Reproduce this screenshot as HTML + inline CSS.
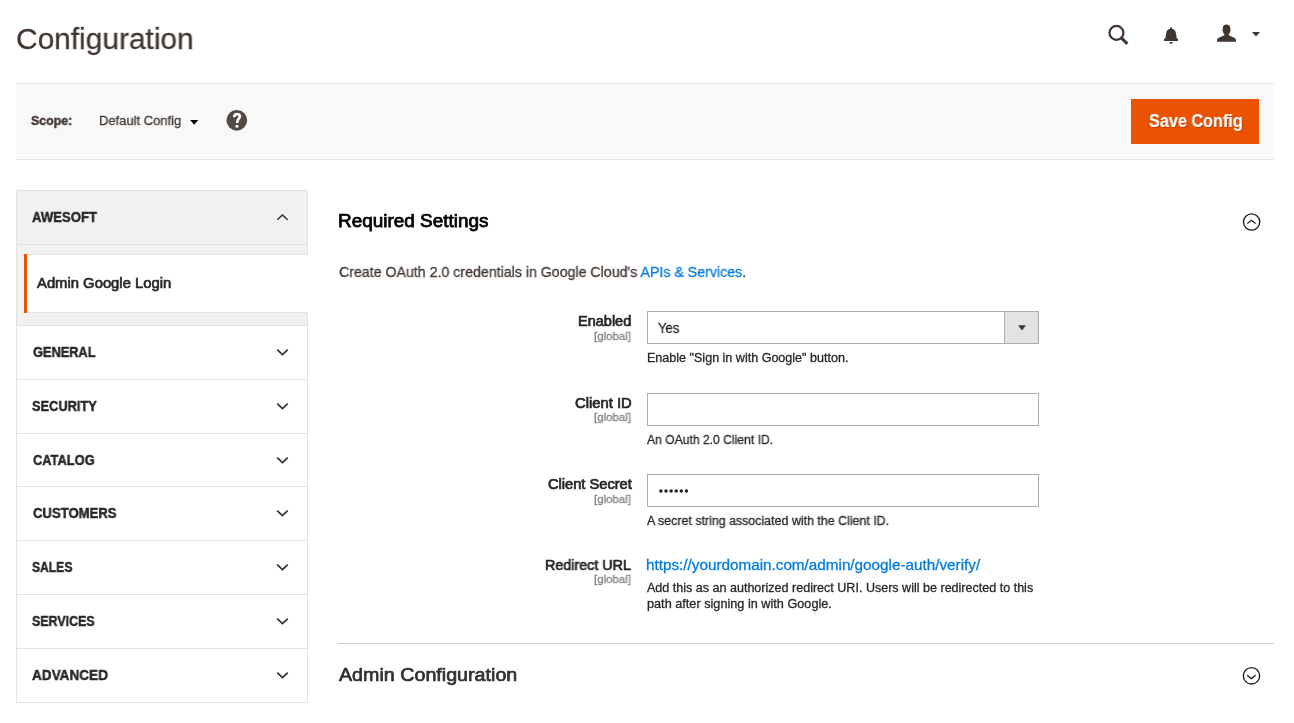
<!DOCTYPE html>
<html><head><meta charset="utf-8">
<style>
html,body{margin:0;padding:0;background:#fff;width:1294px;height:723px;overflow:hidden;position:relative;}
body{font-family:"Liberation Sans",sans-serif;}
.t{position:absolute;white-space:nowrap;line-height:1;transform-origin:0 0;will-change:transform;}
.abs{position:absolute;}
</style></head><body>
<!-- toolbar -->
<div class="abs" style="left:16px;top:83px;width:1258px;height:75px;background:#f8f8f8;border-top:1px solid #e3e3e3;border-bottom:1px solid #e3e3e3;"></div>
<div class="abs" style="left:1131px;top:99px;width:128px;height:45px;background:#eb5202;"></div>
<!-- sidebar -->
<div class="abs" style="left:16px;top:190px;width:290px;height:512px;border:1px solid #e3e3e3;border-bottom:none;background:#fff;"></div>
<div class="abs" style="left:17px;top:191px;width:290px;height:134px;background:#f1f1f1;"></div>
<div class="abs" style="left:17px;top:244px;width:290px;height:1px;background:#e3e3e3;"></div>
<div class="abs" style="left:24px;top:254px;width:296px;height:59px;background:#fff;"></div>
<div class="abs" style="left:27px;top:254px;width:281px;height:1px;background:#e3e3e3;"></div>
<div class="abs" style="left:27px;top:312px;width:281px;height:1px;background:#e3e3e3;"></div>
<div class="abs" style="left:24px;top:254px;width:3px;height:59px;background:#eb5202;"></div>
<div class="abs" style="left:17px;top:325px;width:290px;height:1px;background:#e3e3e3;"></div><div class="abs" style="left:17px;top:379px;width:290px;height:1px;background:#e3e3e3;"></div><div class="abs" style="left:17px;top:433px;width:290px;height:1px;background:#e3e3e3;"></div><div class="abs" style="left:17px;top:486px;width:290px;height:1px;background:#e3e3e3;"></div><div class="abs" style="left:17px;top:540px;width:290px;height:1px;background:#e3e3e3;"></div><div class="abs" style="left:17px;top:594px;width:290px;height:1px;background:#e3e3e3;"></div><div class="abs" style="left:17px;top:648px;width:290px;height:1px;background:#e3e3e3;"></div><div class="abs" style="left:17px;top:702px;width:290px;height:1px;background:#e3e3e3;"></div>
<!-- form controls -->
<div class="abs" style="left:647px;top:311px;width:392px;height:33px;border:1px solid #adadad;box-sizing:border-box;background:#fff;"></div>
<div class="abs" style="left:1004px;top:311px;width:35px;height:33px;border:1px solid #adadad;box-sizing:border-box;background:#e3e3e3;"></div>
<svg class="abs" style="left:1018px;top:325px" width="9" height="6" viewBox="0 0 9 6"><path d="M0.1 0.3 H7.9 L4 5.5Z" fill="#41362f"/></svg>
<div class="abs" style="left:647px;top:393px;width:392px;height:33px;border:1px solid #adadad;box-sizing:border-box;background:#fff;"></div>
<div class="abs" style="left:647px;top:474px;width:392px;height:33px;border:1px solid #adadad;box-sizing:border-box;background:#fff;"></div>
<svg class="abs" style="left:650px;top:480px" width="50" height="20" viewBox="650 480 50 20"><circle cx="660.90" cy="490.9" r="1.75" fill="#222"/><circle cx="666.00" cy="490.9" r="1.75" fill="#222"/><circle cx="671.10" cy="490.9" r="1.75" fill="#222"/><circle cx="676.20" cy="490.9" r="1.75" fill="#222"/><circle cx="681.30" cy="490.9" r="1.75" fill="#222"/><circle cx="686.40" cy="490.9" r="1.75" fill="#222"/></svg>

<div class="abs" style="left:338px;top:643px;width:936px;height:1px;background:#cccccc;"></div>

<svg class="abs" style="left:0;top:0" width="1294" height="723" viewBox="0 0 1294 723">
 <!-- help -->
 <circle cx="236.8" cy="120.3" r="10.35" fill="#514943"/>
 <path d="M234.2 117.3 C234.2 115.2 235.5 114.1 237.1 114.1 C238.8 114.1 239.9 115.1 239.9 116.6 C239.9 118.6 237.3 119.2 237.3 121.4 L237.3 123.1" fill="none" stroke="#fff" stroke-width="2.6"/>
 <circle cx="236.95" cy="126.15" r="1.5" fill="#fff"/>
 <!-- scope arrow -->
 <path d="M190.2 119.9 H198.2 L194.2 124.8Z" fill="#000"/>
 <!-- search -->
 <circle cx="1116.45" cy="32.9" r="6.95" fill="none" stroke="#41362f" stroke-width="2.2"/>
 <path d="M1121.3 37.9 L1127.4 43.9" stroke="#41362f" stroke-width="3" fill="none"/>
 <!-- bell (origin 1160,22) -->
 <g transform="translate(1160 22)" fill="#41362f">
  <circle cx="11.05" cy="6.2" r="1.05"/>
  <path d="M11 6.7 C13.7 6.7 15.4 7.9 15.8 10.8 L16.8 16.3 L18 17.1 L18 18.9 L4.1 18.9 L4.1 17.1 L5.3 16.3 L6.3 10.8 C6.7 7.9 8.3 6.7 11 6.7 Z"/>
  <path d="M9.5 20 H12.6 C12.6 21.1 12 21.8 11.05 21.8 C10.1 21.8 9.5 21.1 9.5 20 Z"/>
 </g>
 <!-- user (origin 1206,18) -->
 <path transform="translate(1206 18)" fill="#41362f" d="M20.5 6.4 C22.8 6.4 24.2 7.6 24.2 10 L24.3 11.6 C24.7 11.7 24.7 12.6 24.3 13 C24 14.5 23.4 15.6 22.7 16.1 L22.7 17.2 L28.2 19.8 C29.4 20.4 29.9 21 29.9 22 L29.9 23.7 L11.1 23.7 L11.1 22 C11.1 21 11.6 20.4 12.8 19.8 L18.3 17.2 L18.3 16.1 C17.6 15.6 17 14.5 16.7 13 C16.3 12.6 16.3 11.7 16.7 11.6 L16.8 10 C16.8 7.6 18.2 6.4 20.5 6.4 Z"/>
 <path d="M1252 32.1 H1260 L1256 36.6Z" fill="#41362f"/>
 <!-- sidebar chevrons -->
 <path d="M277.3 219.7 L282.45 214.95 L287.6 219.7" fill="none" stroke="#303030" stroke-width="1.55"/>
 <path d="M277.2 349.65 L282.45 354.65 L287.7 349.65" fill="none" stroke="#303030" stroke-width="1.7"/>
 <path d="M277.2 403.65 L282.45 408.65 L287.7 403.65" fill="none" stroke="#303030" stroke-width="1.7"/>
 <path d="M277.2 457.65 L282.45 462.65 L287.7 457.65" fill="none" stroke="#303030" stroke-width="1.7"/>
 <path d="M277.2 510.65 L282.45 515.65 L287.7 510.65" fill="none" stroke="#303030" stroke-width="1.7"/>
 <path d="M277.2 564.65 L282.45 569.65 L287.7 564.65" fill="none" stroke="#303030" stroke-width="1.7"/>
 <path d="M277.2 618.65 L282.45 623.65 L287.7 618.65" fill="none" stroke="#303030" stroke-width="1.7"/>
 <path d="M277.2 672.65 L282.45 677.65 L287.7 672.65" fill="none" stroke="#303030" stroke-width="1.7"/>
 <!-- section circles -->
 <circle cx="1251.6" cy="222" r="8.15" fill="none" stroke="#1e1e1e" stroke-width="1.35"/>
 <path d="M1247.3 223.4 L1251.45 220.2 L1255.6 223.4" fill="none" stroke="#1e1e1e" stroke-width="1.3"/>
 <circle cx="1251.5" cy="675.85" r="8.15" fill="none" stroke="#1e1e1e" stroke-width="1.35"/>
 <path d="M1247.1 675.3 L1251.45 678.6 L1255.7 675.3" fill="none" stroke="#1e1e1e" stroke-width="1.3"/>
</svg>
<div class="t" id="title" style="left:16.31px;top:23.71px;font-size:30px;font-weight:400;-webkit-text-stroke:0.28px currentColor;letter-spacing:0.000px;transform:scaleX(0.9957);color:#41362f;">Configuration</div>
<div class="t" id="scope" style="left:31.10px;top:113.91px;font-size:13.5px;font-weight:700;-webkit-text-stroke:0.45px currentColor;letter-spacing:0.000px;transform:scaleX(0.9166);color:#41362f;">Scope:</div>
<div class="t" id="default" style="left:98.54px;top:113.91px;font-size:13.5px;font-weight:400;-webkit-text-stroke:0.28px currentColor;letter-spacing:0.000px;transform:scaleX(0.9614);color:#41362f;">Default Config</div>
<div class="t" id="save" style="left:1148.81px;top:113.32px;font-size:17.5px;font-weight:700;-webkit-text-stroke:0.15px currentColor;letter-spacing:0.000px;transform:scaleX(0.9269);color:#ffffff;text-shadow:1px 1px 0 rgba(0,0,0,.25);">Save Config</div>
<div class="t" id="awesoft" style="left:31.90px;top:209.91px;font-size:14.5px;font-weight:700;-webkit-text-stroke:0.45px currentColor;letter-spacing:0.000px;transform:scaleX(0.9062);color:#262626;">AWESOFT</div>
<div class="t" id="agl" style="left:37.21px;top:275.81px;font-size:14.5px;font-weight:400;-webkit-text-stroke:0.65px currentColor;letter-spacing:0.000px;transform:scaleX(1.0219);color:#262626;">Admin Google Login</div>
<div class="t" id="general" style="left:32.81px;top:344.81px;font-size:14.3px;font-weight:700;-webkit-text-stroke:0.45px currentColor;letter-spacing:0.000px;transform:scaleX(0.8936);color:#262626;">GENERAL</div>
<div class="t" id="security" style="left:32.31px;top:398.81px;font-size:14.3px;font-weight:700;-webkit-text-stroke:0.45px currentColor;letter-spacing:0.000px;transform:scaleX(0.8962);color:#262626;">SECURITY</div>
<div class="t" id="catalog" style="left:32.81px;top:452.81px;font-size:14.3px;font-weight:700;-webkit-text-stroke:0.45px currentColor;letter-spacing:0.000px;transform:scaleX(0.9001);color:#262626;">CATALOG</div>
<div class="t" id="customers" style="left:32.81px;top:505.81px;font-size:14.3px;font-weight:700;-webkit-text-stroke:0.45px currentColor;letter-spacing:0.000px;transform:scaleX(0.9166);color:#262626;">CUSTOMERS</div>
<div class="t" id="sales" style="left:32.31px;top:559.81px;font-size:14.3px;font-weight:700;-webkit-text-stroke:0.45px currentColor;letter-spacing:0.000px;transform:scaleX(0.8466);color:#262626;">SALES</div>
<div class="t" id="services" style="left:32.31px;top:613.81px;font-size:14.3px;font-weight:700;-webkit-text-stroke:0.45px currentColor;letter-spacing:0.000px;transform:scaleX(0.8684);color:#262626;">SERVICES</div>
<div class="t" id="advanced" style="left:32.21px;top:667.81px;font-size:14.3px;font-weight:700;-webkit-text-stroke:0.45px currentColor;letter-spacing:0.000px;transform:scaleX(0.9493);color:#262626;">ADVANCED</div>
<div class="t" id="req" style="left:337.85px;top:212.01px;font-size:18px;font-weight:400;-webkit-text-stroke:0.75px currentColor;letter-spacing:0.000px;transform:scaleX(1.0515);color:#000000;">Required Settings</div>
<div class="t" id="intro" style="left:338.81px;top:264.81px;font-size:14.5px;font-weight:400;-webkit-text-stroke:0.28px currentColor;letter-spacing:0.000px;transform:scaleX(0.9779);color:#41362f;">Create OAuth 2.0 credentials in Google Cloud's <span style="color:#007bdb">APIs &amp; Services</span>.</div>
<div class="t" id="enabled" style="left:578.00px;top:313.91px;font-size:14.5px;font-weight:400;-webkit-text-stroke:0.7px currentColor;letter-spacing:0.000px;transform:scaleX(1.0010);color:#262626;">Enabled</div>
<div class="t" id="yes" style="left:658.00px;top:320.81px;font-size:14.5px;font-weight:400;-webkit-text-stroke:0.28px currentColor;letter-spacing:0.000px;transform:scaleX(0.8973);color:#262626;">Yes</div>
<div class="t" id="note1" style="left:646.59px;top:352.20px;font-size:12.5px;font-weight:400;-webkit-text-stroke:0.28px currentColor;letter-spacing:0.000px;transform:scaleX(1.0035);color:#262626;">Enable "Sign in with Google" button.</div>
<div class="t" id="clientid" style="left:575.00px;top:395.70px;font-size:14.5px;font-weight:400;-webkit-text-stroke:0.7px currentColor;letter-spacing:0.000px;transform:scaleX(1.0194);color:#262626;">Client ID</div>
<div class="t" id="note2" style="left:647.00px;top:433.51px;font-size:12.5px;font-weight:400;-webkit-text-stroke:0.28px currentColor;letter-spacing:0.000px;transform:scaleX(0.9702);color:#262626;">An OAuth 2.0 Client ID.</div>
<div class="t" id="secret" style="left:547.71px;top:476.91px;font-size:14.5px;font-weight:400;-webkit-text-stroke:0.7px currentColor;letter-spacing:0.000px;transform:scaleX(1.0099);color:#262626;">Client Secret</div>
<div class="t" id="note3" style="left:647.00px;top:514.70px;font-size:12.5px;font-weight:400;-webkit-text-stroke:0.28px currentColor;letter-spacing:0.000px;transform:scaleX(0.9927);color:#262626;">A secret string associated with the Client ID.</div>
<div class="t" id="redirect" style="left:545.22px;top:557.81px;font-size:14.5px;font-weight:400;-webkit-text-stroke:0.7px currentColor;letter-spacing:0.000px;transform:scaleX(0.9865);color:#262626;">Redirect URL</div>
<div class="t" id="link" style="left:646.45px;top:557.70px;font-size:14.5px;font-weight:400;-webkit-text-stroke:0.28px currentColor;letter-spacing:0.000px;transform:scaleX(1.0522);color:#007bdb;">https://yourdomain.com/admin/google-auth/verify/</div>
<div class="t" id="note4a" style="left:647.00px;top:581.61px;font-size:12.5px;font-weight:400;-webkit-text-stroke:0.28px currentColor;letter-spacing:0.000px;transform:scaleX(1.0033);color:#262626;">Add this as an authorized redirect URI. Users will be redirected to this</div>
<div class="t" id="note4b" style="left:647.00px;top:598.11px;font-size:12.5px;font-weight:400;-webkit-text-stroke:0.28px currentColor;letter-spacing:0.000px;transform:scaleX(1.0155);color:#262626;">path after signing in with Google.</div>
<div class="t" id="admincfg" style="left:338.50px;top:665.81px;font-size:18.3px;font-weight:400;-webkit-text-stroke:0.7px currentColor;letter-spacing:0.000px;transform:scaleX(1.0762);color:#303030;">Admin Configuration</div>
<div class="t" id="g1" style="left:594.10px;top:330.49px;font-size:11.7px;font-weight:400;-webkit-text-stroke:0.28px currentColor;letter-spacing:0.000px;transform:scaleX(0.9829);color:#808080;">[global]</div>
<div class="t" id="g2" style="left:594.10px;top:411.19px;font-size:11.7px;font-weight:400;-webkit-text-stroke:0.28px currentColor;letter-spacing:0.000px;transform:scaleX(0.9829);color:#808080;">[global]</div>
<div class="t" id="g3" style="left:594.10px;top:492.59px;font-size:11.7px;font-weight:400;-webkit-text-stroke:0.28px currentColor;letter-spacing:0.000px;transform:scaleX(0.9829);color:#808080;">[global]</div>
<div class="t" id="g4" style="left:594.10px;top:573.29px;font-size:11.7px;font-weight:400;-webkit-text-stroke:0.28px currentColor;letter-spacing:0.000px;transform:scaleX(0.9829);color:#808080;">[global]</div>
</body></html>
